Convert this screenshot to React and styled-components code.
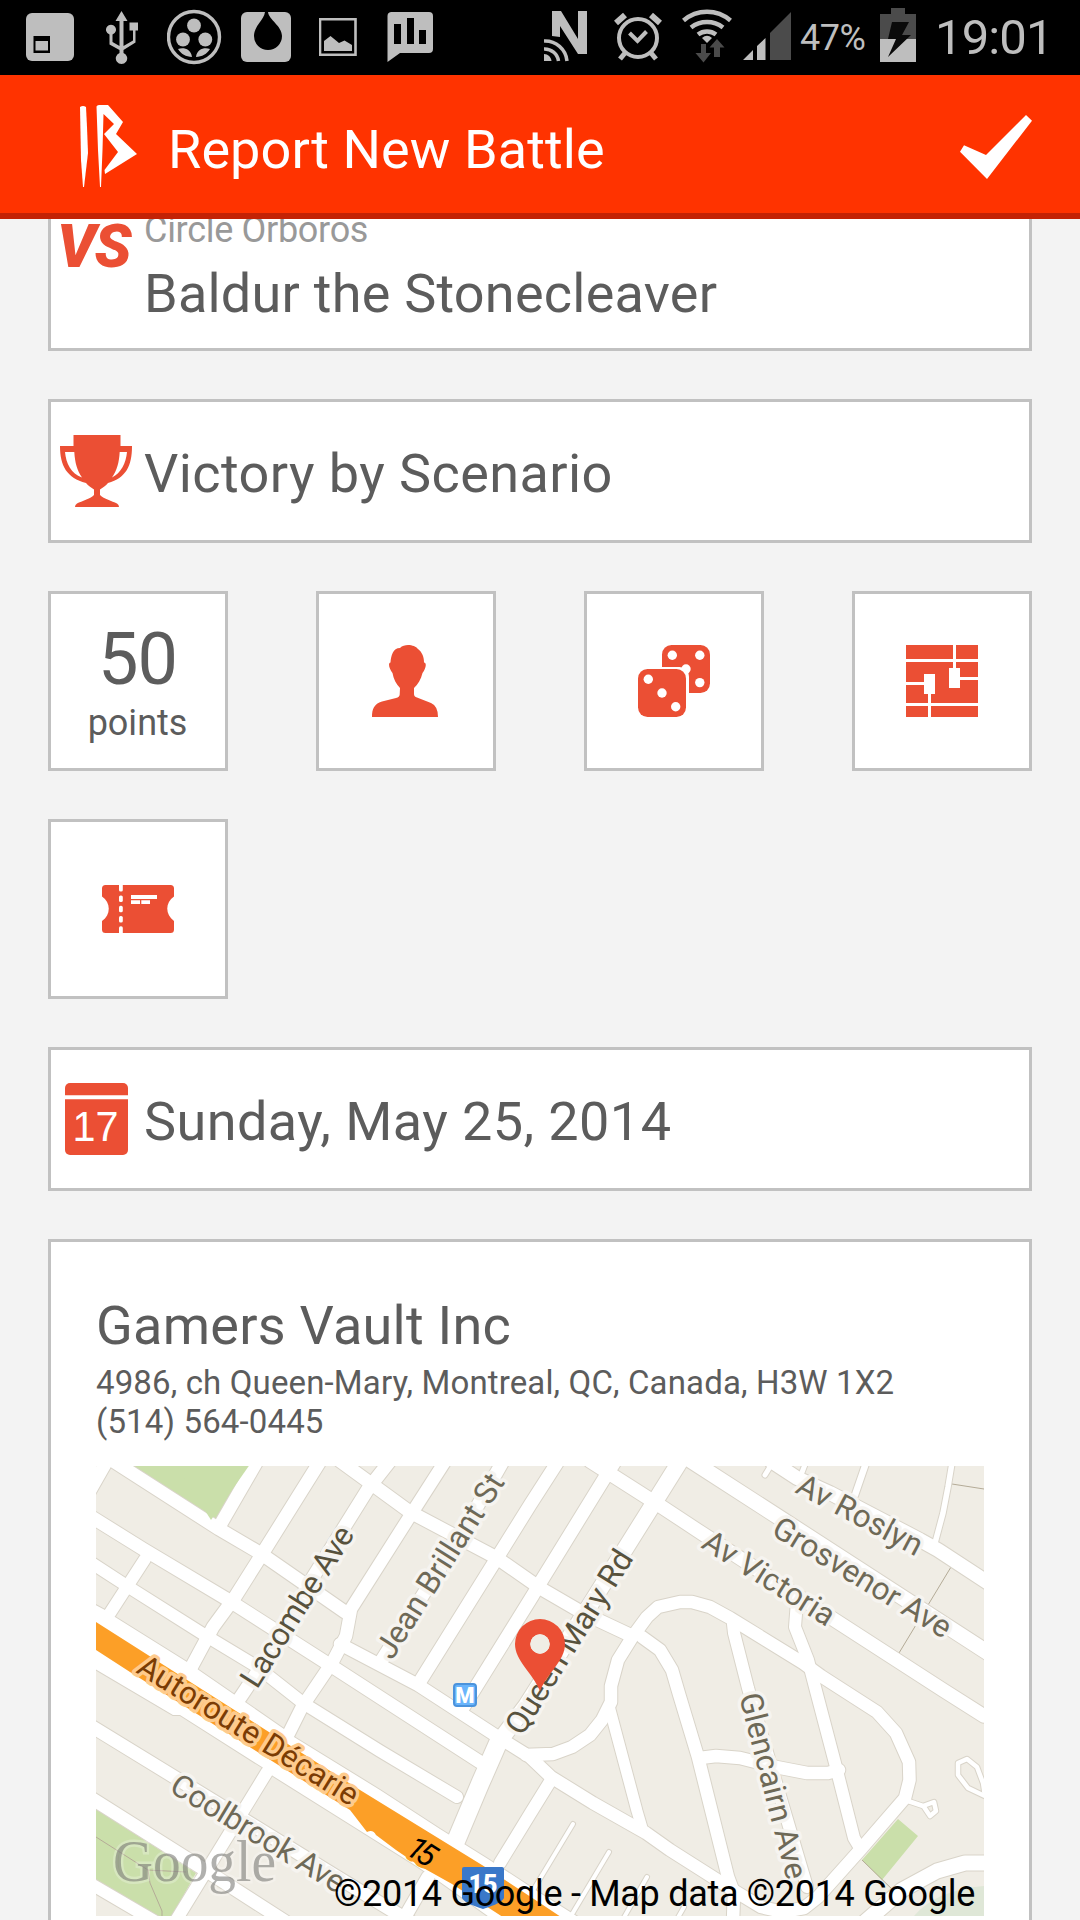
import React from "react";
import styled, { createGlobalStyle } from "styled-components";

const Global = createGlobalStyle`
  html, body { margin: 0; padding: 0; background: #f3f3f3; }
  * { box-sizing: border-box; }
  svg { display: block; flex: none; }
`;

const ACCENT = "#eb4f34";
const GREY = "#bebebe";
const DIM = "#4b4b4b";

const Screen = styled.div`
  width: 1080px;
  height: 1920px;
  overflow: hidden;
  display: flex;
  flex-direction: column;
  background: #f3f3f3;
  color: #5c5c5c;
  font-family: Roboto, "Noto Sans", sans-serif;
`;

const StatusBar = styled.header`
  flex: none;
  height: 75px;
  display: flex;
  align-items: center;
  justify-content: space-between;
  padding: 0 34px 0 26px;
  background: #000;
  color: ${GREY};
`;

const StatusGroup = styled.div`
  display: flex;
  align-items: center;
  height: 75px;
`;

const Percent = styled.span`
  width: 65px;
  margin: 0 15px 0 8px;
  font-size: 36px;
  line-height: 76px;
  letter-spacing: -0.5px;
  white-space: nowrap;
`;

const Clock = styled.span`
  width: 111px;
  margin-left: 18px;
  font-size: 49px;
  line-height: 71px;
  letter-spacing: -0.9px;
  white-space: nowrap;
`;

const AppBar = styled.div`
  flex: none;
  height: 144px;
  display: flex;
  align-items: center;
  padding: 0 48px 0 79px;
  background: #ff3300;
  border-bottom: 6px solid #c32205;
  color: #fff;
`;

const AppTitle = styled.h1`
  flex: 1;
  margin: 0 0 0 29px;
  padding-top: 11px;
  font-size: 54px;
  font-weight: 400;
  line-height: 64px;
  letter-spacing: 0.1px;
  white-space: nowrap;
`;

const Form = styled.main`
  flex: 1;
  min-height: 0;
  overflow: hidden;
  display: flex;
  flex-direction: column;
  gap: 48px;
  padding: 0 48px;
`;

const Card = styled.section`
  flex: none;
  display: flex;
  background: #fff;
  border: 3px solid #c1c1c1;
`;

const FieldCard = styled(Card)`
  height: 144px;
  align-items: center;
  padding-left: 9px;
`;

const VersusCard = styled(Card)`
  height: 132px;
  border-top: 0;
  padding-left: 9px;
`;

const IconSlot = styled.div`
  width: 72px;
  margin-right: 12px;
  display: flex;
  justify-content: center;
`;

const Versus = styled.span`
  width: 75px;
  margin: -4px 12px 0 -3px;
  color: ${ACCENT};
  font-size: 61px;
  font-weight: 900;
  font-style: italic;
  line-height: 62px;
  letter-spacing: -1.5px;
  white-space: nowrap;
`;

const FieldText = styled.span`
  padding-top: ${(p) => p.$drop || 0}px;
  font-size: 54px;
  line-height: 64px;
  letter-spacing: ${(p) => p.$track || 0}px;
  white-space: nowrap;
`;

const Opponent = styled.div`
  display: flex;
  flex-direction: column;
  gap: 11px;
  margin-top: -10px;
`;

const Faction = styled.span`
  color: #999;
  font-size: 36px;
  line-height: 42px;
  letter-spacing: -0.3px;
  white-space: nowrap;
`;

const Tiles = styled.div`
  flex: none;
  display: grid;
  grid-template-columns: repeat(4, 180px);
  grid-auto-rows: 180px;
  column-gap: 88px;
  row-gap: 48px;
`;

const Tile = styled(Card)`
  flex-direction: column;
  align-items: center;
  justify-content: center;
`;

const PointsTile = styled(Tile)`
  justify-content: flex-start;
  padding: 30px 1px 0 0;
`;

const Points = styled.span`
  font-size: 72px;
  line-height: 72px;
  letter-spacing: -1px;
`;

const PointsLabel = styled.span`
  margin-top: 6px;
  font-size: 36px;
  line-height: 42px;
`;

const VenueCard = styled(Card)`
  flex-direction: column;
  height: 728px;
  padding: 52px 45px 0;
`;

const Address = styled.p`
  margin: 0;
  font-size: 33px;
  line-height: 39px;
  letter-spacing: 0.14px;
  white-space: nowrap;
`;

const VenueName = styled(FieldText)`
  margin-bottom: 5px;
`;

const MapFrame = styled.figure`
  position: relative;
  flex: none;
  width: 888px;
  height: 450px;
  margin: 25px 0 0;
  overflow: hidden;
`;

const Attribution = styled.figcaption`
  position: absolute;
  right: 9px;
  bottom: 0;
  color: #000;
  font-size: 36px;
  line-height: 44px;
  letter-spacing: -0.3px;
  white-space: nowrap;
`;

/* Icons are drawn in screen units; x and w give the strip of the bar they fill. */
const BarIcon = ({ x, w, y = 0, h = 75, children }) => (
  <svg width={w} height={h} viewBox={`${x} ${y} ${w} ${h}`} fill={GREY}>{children}</svg>
);

const LeftStatus = () => (
  <StatusGroup>
    <BarIcon x={26} w={80}>
      <rect x="26" y="13" width="48" height="48" rx="6" />
      <path fillRule="evenodd" d="M33.500 36h16.500v17H33.500zM35.500 41v9.500h12.500V41z" fill="#000" />
    </BarIcon>
    <BarIcon x={106} w={61}>
      <path d="M121.500 11l6 10h-4v25l9.500-5.500v-10h-3.500v-8h8.500v8h-2.500v12L123.500 50v3a5.700 5.700 0 1 1-4 0v-3l-10-5.500v-10a5 5 0 1 1 3 0v7.500l7 4V21h-4z" />
    </BarIcon>
    <BarIcon x={167} w={74}>
      <circle cx="194" cy="37" r="25.500" fill="none" stroke={GREY} strokeWidth="3.400" />
      <circle cx="194" cy="25.500" r="6.900" />
      <circle cx="183" cy="39.500" r="6.900" />
      <circle cx="205.300" cy="39.500" r="6.900" />
      <path d="M178 49c5-2 13-.5 14 8-6-.3-11-3-14-8zM210 49c-5-2-13-.5-14 8 6-.3 11-3 14-8z" />
    </BarIcon>
    <BarIcon x={241} w={78}>
      <rect x="241" y="12" width="50" height="50" rx="6" />
      <path d="M265 12h3c1 8 14 14 14 24a14 14 0 0 1-28 0c0-10 10-16 11-24z" fill="#000" />
    </BarIcon>
    <BarIcon x={319} w={68}>
      <path d="M320 19.200h35.500v35.600H320z" fill="none" stroke={GREY} strokeWidth="2.600" />
      <path d="M324 51V41l6.500-5 8.500 7 5.500-2.500 7.500 4.500v6z" />
    </BarIcon>
    <BarIcon x={387} w={46}>
      <path d="M391 12h38a4 4 0 0 1 4 4v33a4 4 0 0 1-4 4h-29l-12.500 9V16a4 4 0 0 1 3.500-4z" />
      <path d="M394 24h7v20h-7zM407 18h7v26h-7zM419 30h7v14h-7z" fill="#000" />
    </BarIcon>
  </StatusGroup>
);

const RightStatus = () => (
  <StatusGroup>
    <BarIcon x={543} w={70}>
      <path d="M551 11h9l17 28V11h9v43h-9l-18-28v11l-8-1z" />
      <g fill="none" stroke={GREY} strokeWidth="3.500">
        <path d="M543 41a22 22 0 0 1 23 20M543 49a14 14 0 0 1 14.500 12" />
      </g>
      <path d="M543 54c4 0 7 3 7.500 7H543z" />
    </BarIcon>
    <BarIcon x={613} w={68}>
      <g fill="none" stroke={GREY}>
        <circle cx="637" cy="38" r="19" strokeWidth="4" />
        <path d="M628.500 33l8 8 9-9.500" strokeWidth="4" />
        <path d="M615 23l9-8M659 23l-9-8" strokeWidth="6" />
        <path d="M624 53l-5 6M650 53l5 6" strokeWidth="5" />
      </g>
    </BarIcon>
    <BarIcon x={681} w={61}>
      <g fill="none" stroke={GREY} strokeWidth="4.500">
        <path d="M682.500 20.500a36 36 0 0 1 47 0M690 27.500a26 26 0 0 1 32 0M697 34.500a15 15 0 0 1 18 0" />
      </g>
      <path d="M701 38q5-4.500 10 0l-5 5z" />
      <path d="M700 44h5v9h5l-7.500 9.500L694.500 53h5.500zM713 57h6V47.500h4.500L716 39l-7.500 8.500h4.500z" fill={DIM} />
    </BarIcon>
    <BarIcon x={742} w={49}>
      <path d="M742 60l10-10v10zM756 60V46l8.500-8v22z" />
      <path d="M769 60V33l21-21v48z" fill={DIM} />
    </BarIcon>
    <Percent>47%</Percent>
    <BarIcon x={880} w={37}>
      <path d="M891 8h14v6h11v25h-36V14h11z" fill={DIM} />
      <path d="M880 39h36v23h-36z" />
      <path d="M892 22h17l-7 13h9l-23 22 8-18h-8z" fill="#0a0a0a" />
    </BarIcon>
    <Clock>19:01</Clock>
  </StatusGroup>
);

const Logo = () => (
  <svg width="60" height="138" viewBox="79 75 60 138" fill="#fff">
    <path d="M80 107q3-2 6 0l1 20 1 26-4 34h-1l-2-27z" />
    <path d="M96.500 106.500Q97 105 99 105h9l15 17-7 12 21 20-32 20-.5-4L118 152l-14-18 10-10-10.500-10-1 36-1.500 37h-1l-2-37z" />
  </svg>
);

const CheckMark = () => (
  <svg width="72" height="138" viewBox="960 75 72 138" fill="#fff">
    <path d="M964 145.300L986 155l40-40 6 5.700L987 179l-27-27.300z" />
  </svg>
);

const Trophy = () => (
  <svg width="72" height="72" viewBox="0 0 72 72" fill={ACCENT}>
    <path fillRule="evenodd" d="M13.500 0h47v11H72c0 20-6 32-24 37-2 3-6 5-8 6.500V60c4 4 12 6 17 8.500q2 1 2 3.500H15q0-2.500 2-3.500c5-2.500 13-4.500 17-8.500v-5.500C32 53 28 51 26 48 7 43 0 31 0 11h13.500zM5 17c1 11 6 22 17 25.500C17 35 15 28 14.300 17zM67 17h-7.300C59 28 57 35 52 42.500 61 38 66 28 67 17z" />
  </svg>
);

const Person = () => (
  <svg width="72" height="72" viewBox="-2 0 72 72" fill={ACCENT}>
    <path d="M28 3c5-5 15-3 18 1 4 3 6 8 6 13.500 3 0 2 6-1.500 10.500C49 34 46 39.500 42 43v6q0 2.500 3 3.500l14 5.500q7 3 7 14H0c0-8 2-13 10-15.500L24 53q3.500-1 3.700-3.500L28 43c-4-4-6.500-9-7.500-15-3-3.500-5-10-2-10.500C19 11 21 3 28 3z" />
  </svg>
);

const Dice = () => (
  <svg width="72" height="72" viewBox="0 0 72 72">
    <rect x="24" y="0" width="48" height="48" rx="9.500" fill={ACCENT} />
    <path d="M22 22h19.500a9.500 9.500 0 0 1 9.500 9.500V50H22z" fill="#fff" />
    <g fill="#fff">
      <circle cx="34.300" cy="10.300" r="4.700" /><circle cx="61.800" cy="10.300" r="4.700" />
      <circle cx="48" cy="24" r="4.700" /><circle cx="61.800" cy="37.600" r="4.700" />
    </g>
    <rect x="0" y="24" width="48" height="48" rx="9.500" fill={ACCENT} />
    <g fill="#fff">
      <circle cx="10.300" cy="34.300" r="4.700" /><circle cx="24" cy="48" r="4.700" /><circle cx="37.700" cy="61.700" r="4.700" />
    </g>
  </svg>
);

const Board = () => (
  <svg width="72" height="72" viewBox="0 0 72 72">
    <path fill={ACCENT} d="M0 0h72v72H0z" />
    <path fill="#fff" d="M0 14h72v3H0zM0 58h72v3H0zM47 0h3v24h-3zM43 23h11v20H43zM54 32h18v3H54zM18 29h11v20H18zM0 37h18v3H0zM22 49h3v23h-3z" />
  </svg>
);

const Ticket = () => (
  <svg width="72" height="72" viewBox="0 -12 72 72">
    <path fill={ACCENT} d="M3.500 0h65Q72 0 72 3.500V11.500c-9 6-9 18 0 24.500v8.500q0 3.500-3.500 3.500h-65Q0 48 0 44.500V36c9-6 9-18.500 0-24.500v-8Q0 0 3.500 0z" />
    <g fill="#fff">
      <rect x="17" y="-3" width="3.800" height="9.500" rx="1.600" />
      <rect x="17" y="10.500" width="3.800" height="6.500" rx="1.600" />
      <rect x="17" y="20.800" width="3.800" height="6.500" rx="1.600" />
      <rect x="17" y="31" width="3.800" height="6.500" rx="1.600" />
      <rect x="17" y="41.300" width="3.800" height="9.500" rx="1.600" />
      <path d="M29 10h26v4H29zM29 15.300h9V19h-9zM39.300 15.300H48V19h-8.700z" />
    </g>
  </svg>
);

const DayNumber = styled.text`
  font-family: "Liberation Sans", sans-serif;
  font-size: 43px;
  fill: #fff;
`;

const Calendar = () => (
  <svg width="63" height="72" viewBox="0 0 63 72">
    <rect width="63" height="72" rx="5" fill={ACCENT} />
    <path fill="#fff" d="M0 12.300h63v4H0z" />
    <DayNumber x="7.500" y="57.500" textLength="46" lengthAdjust="spacingAndGlyphs">17</DayNumber>
  </svg>
);

/* Street network: [points, width] in map units. */
const STREETS = [
  ["14,-7 123,63 164,87 249,146", 13],
  ["-6,50 47,83 129,132 237,201 384,296", 13],
  ["-6,96 31,120 107,168 160,200 207,237 284,285 361,331", 12],
  ["244,-5 314,46 401,92 444,122 487,147 536,170", 13],
  ["244,178 322,219 402,271 434,291 455,311 497,337 550,367 574,384 637,424 665,441 687,446 708,442 722,431 764,384 809,332 813.500,314 813,296 800,267 781,246 725,210 707,197 634,152 614,141 596,136 584,136 562,141 551,151 537,170 522,194 515,220 515,236 506,254 494,269 476,281 457,288 430,289", 12.500],
  ["9,-2 -8,28", 13],
  ["49,93 14,147", 12],
  ["160,-3 123,61", 13],
  ["223,-3 168,85 139,131 117,161 96,200 80,225", 13],
  ["294,-5 272,23 214,116 172,190 146,229 130,252", 13],
  ["348,-3 314,50 255,143 250,170 237,195 229,207 206,241 193,267 183,285", 12.500],
  ["406,-3 366,67 284,197", 13],
  ["461,-3 434,39 401,92 323,217", 13],
  ["520,-6 508,13 444,117 437,129 365,245", 13],
  ["583,-3 563,29 489,147 430,240 402,277", 16],
  ["402,277 384,318 360,375", 18],
  ["494,-5 566,41 607,68 734,151 847,224 888,250", 13.500],
  ["594,-6 687,54 900,192", 15],
  ["675,-5 701,12 734,27 824,74 842,84 900,122", 14],
  ["677,-4 669,9", 5], ["710,-4 705,9", 5], ["770,-3 759,29", 6.500],
  ["856,-3 852,21 847,47 839,77", 5.500],
  ["546,171 564,184 576,204 583,228 602,291 632,411 638,427 637,455", 12.500],
  ["513,240 541,345 546,362", 11],
  ["637,158 638,167 652,222 711,421", 12],
  ["701,135 699,161 712,194 719,221 739,297 758,372 764,382", 12],
  ["604,292 620,290 644,292 680,301 711,307 732,307 743,304", 12.500],
  ["455,314 434,348 404,397", 12],
  ["477,358 430,436", 4], ["513,386 472,455", 4], ["551,411 526,455", 4], ["588,441 580,455", 4], ["436,427 480,455", 7],
  ["812,335 827,340 838,336 840,345 834,350 828,341", 4.500],
  ["893,332 872,322 862,309 862,297 871,293 881,301 887,317 889,330", 4.500],
  ["769,456 806,424 841,405 869,397 892,397", 15],
  ["-5,260 137,347 241,411 315,456", 13],
  ["-5,332 106,402 190,456", 13],
  ["171,306 79,456", 12],
  ["-5,418 60,456", 12],
  ["332,411 306,456", 13],
];
const SERVICE = "-6,136 9,144 19,151 91,196 136,227 188,263 198,271 284,324 344,363 392,393 444,427 490,456 420,470 344,416 322,401 177,310 166,301 84,249 77,249 -6,200";

const Street = styled.polyline`
  fill: none;
  stroke: ${(p) => (p.$casing ? "#d9d4c9" : "#fff")};
  stroke-width: ${(p) => p.$w + (p.$casing ? 2 : 0)}px;
  stroke-linejoin: round;
  stroke-linecap: round;
`;

const Label = styled.text`
  font-family: Roboto, "Noto Sans", sans-serif;
  font-size: 31.5px;
  fill: ${(p) => p.$color || "#6e6957"};
  stroke: ${(p) => p.$halo || "#f6f4f0"};
  stroke-width: 7px;
  stroke-linejoin: round;
  paint-order: stroke;
`;

const Watermark = styled.text`
  font-family: "Liberation Serif", serif;
  font-size: 60px;
  fill: #70706c;
  fill-opacity: 0.55;
  stroke: #fff;
  stroke-opacity: 0.25;
  stroke-width: 5px;
  paint-order: stroke;
`;

const Badge = styled.text`
  font-family: Roboto, "Noto Sans", sans-serif;
  font-weight: 900;
  font-size: ${(p) => p.$size}px;
  fill: #fff;
`;

const StreetName = ({ x, y, angle, length, children, ...rest }) => (
  <Label transform={`translate(${x} ${y}) rotate(${angle})`} textLength={length} {...rest}>{children}</Label>
);

const StreetMap = () => (
  <svg width="888" height="450" viewBox="0 0 888 450">
    <path fill="#f0ede5" d="M0 0h888v450H0z" />
    <g fill="#cadfaa">
      <path d="M30-5h127l-39 61L30-3zM0 343l100 64-24 43H61L0 414zM802 353l20 17-36 44-20-20z" />
    </g>
    <path fill="#dfe7d7" d="M818 450q22-26 70-30v30z" />
    <g fill="none" stroke="#b4ab97" strokeWidth="1">
      <path d="M0 371l52 33 38 2M52 404l2 13 12 28v5M856 18l32 5M855 101l-52 86M766 394l34 33" />
    </g>
    {STREETS.map(([pts, w]) => <Street key={`c${pts}`} points={pts} $w={w} $casing />)}
    <polygon points={SERVICE} fill="#fff" stroke="#d9d4c9" strokeWidth="2" />
    {STREETS.map(([pts, w]) => <Street key={pts} points={pts} $w={w} />)}
    <polygon points={SERVICE} fill="#fff" />
    <path fill="#fc9f27" d="M0 156L264 324 386 399l58 38 30 20h-58l-60-39-34-19-22-15-20-15q-3-6-9-3L254 344 34 206 0 184z" />
    <path fill="#cadfaa" d="M115 54l42-60h-80z" />

    <StreetName x={161} y={224} angle={-57.800} length={184} $color="#58523d">Lacombe Ave</StreetName>
    <StreetName x={296} y={195} angle={-57.600} length={212}>Jean Brillant St</StreetName>
    <StreetName x={426} y={271} angle={-57.900} length={211} $color="#58523d">Queen Mary Rd</StreetName>
    <StreetName x={604} y={81} angle={32.300} length={150}>Av Victoria</StreetName>
    <StreetName x={674} y={68} angle={31.200} length={203}>Grosvenor Ave</StreetName>
    <StreetName x={698} y={26} angle={27.900} length={138}>Av Roslyn</StreetName>
    <StreetName x={72} y={325} angle={31.300} length={198}>Coolbrook Ave</StreetName>
    <StreetName x={643} y={230} angle={75.500} length={191}>Glencairn Ave</StreetName>
    <StreetName x={39} y={206} angle={32} length={254} $color="#7b3c04" $halo="#fecb8d">Autoroute Décarie</StreetName>
    <StreetName x={308} y={387} angle={32} length={29} $color="#000" $halo="#fc9f27" fontStyle="italic">15</StreetName>

    <rect x="358" y="218" width="22" height="22" rx="3" fill="#69b4fb" stroke="#4b93dc" strokeWidth="2" />
    <Badge $size={22} x="369" y="237" textAnchor="middle">M</Badge>
    <path fill="#3a78c9" d="M368 401h38q2 0 2 2v29q-2 5-21 11-19-6-21-11v-29q0-2 2-2z" />
    <Badge $size={25} x="387" y="427" textAnchor="middle">15</Badge>

    <Watermark x="17" y="415" textLength="163" lengthAdjust="spacingAndGlyphs">Google</Watermark>

    <path fill={ACCENT} fillRule="evenodd" d="M444 153a25 25 0 0 1 25 25c0 17-17 28-25 47-8-19-25-30-25-47a25 25 0 0 1 25-25zm0 15.300a9.700 9.700 0 1 0 0 19.400 9.700 9.700 0 0 0 0-19.400z" />
    <circle cx="444" cy="178" r="9.700" fill="#f0ede5" />
  </svg>
);

export default function App() {
  return (
    <>
      <Global />
      <Screen>
        <StatusBar>
          <LeftStatus />
          <RightStatus />
        </StatusBar>
        <AppBar>
          <Logo />
          <AppTitle>Report New Battle</AppTitle>
          <CheckMark />
        </AppBar>
        <Form>
          <VersusCard>
            <Versus>VS</Versus>
            <Opponent>
              <Faction>Circle Orboros</Faction>
              <FieldText $track={0.24}>Baldur the Stonecleaver</FieldText>
            </Opponent>
          </VersusCard>
          <FieldCard>
            <IconSlot><Trophy /></IconSlot>
            <FieldText $drop={5} $track={0.42}>Victory by Scenario</FieldText>
          </FieldCard>
          <Tiles>
            <PointsTile>
              <Points>50</Points>
              <PointsLabel>points</PointsLabel>
            </PointsTile>
            <Tile><Person /></Tile>
            <Tile><Dice /></Tile>
            <Tile><Board /></Tile>
            <Tile><Ticket /></Tile>
          </Tiles>
          <FieldCard>
            <IconSlot><Calendar /></IconSlot>
            <FieldText $drop={5} $track={0.42}>Sunday, May 25, 2014</FieldText>
          </FieldCard>
          <VenueCard>
            <VenueName $track={0.25}>Gamers Vault Inc</VenueName>
            <Address>4986, ch Queen-Mary, Montreal, QC, Canada, H3W 1X2</Address>
            <Address>(514) 564-0445</Address>
            <MapFrame>
              <StreetMap />
              <Attribution>©2014 Google - Map data ©2014 Google</Attribution>
            </MapFrame>
          </VenueCard>
        </Form>
      </Screen>
    </>
  );
}
